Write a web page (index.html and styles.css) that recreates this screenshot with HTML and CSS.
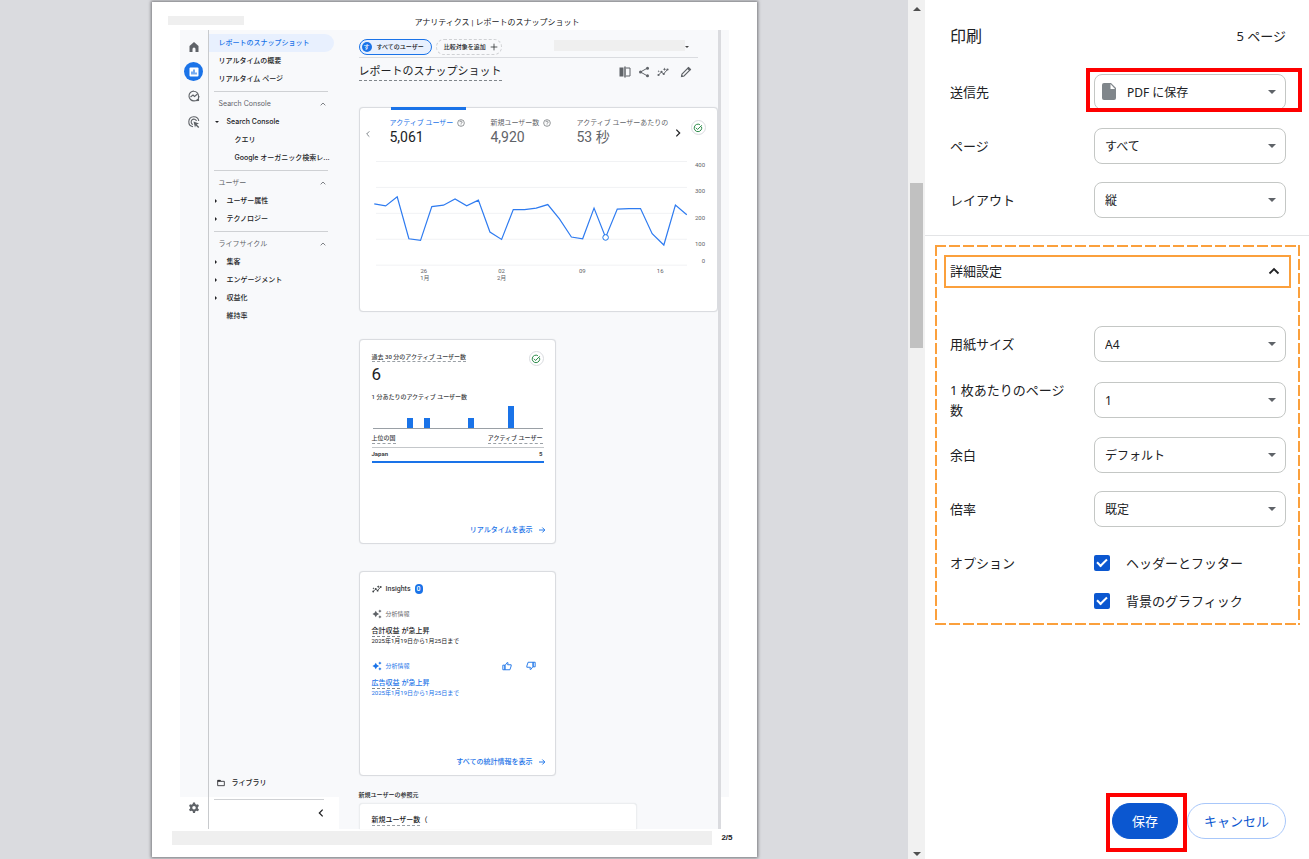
FILE: index.html
```
<!DOCTYPE html>
<html lang="ja">
<head>
<meta charset="utf-8">
<title>印刷</title>
<link rel="stylesheet" href="styles.css">
</head>
<body>
<svg class="sprite" aria-hidden="true">
  <symbol id="chev-up" viewBox="0 0 24 24"><path d="M5 16l7-7 7 7" fill="none" stroke="currentColor" stroke-width="2.4"/></symbol>
  <symbol id="chev-left" viewBox="0 0 24 24"><path d="M16 4l-8 8 8 8" fill="none" stroke="currentColor" stroke-width="3"/></symbol>
  <symbol id="chev-right" viewBox="0 0 24 24"><path d="M8 4l8 8-8 8" fill="none" stroke="currentColor" stroke-width="3"/></symbol>
  <symbol id="help" viewBox="0 0 24 24"><circle cx="12" cy="12" r="10" fill="none" stroke="currentColor" stroke-width="2"/><path d="M8.800 9.500a3.200 3.200 0 1 1 5 2.600c-1.200.9-1.800 1.400-1.800 2.900M12 16.500v2.200" fill="none" stroke="currentColor" stroke-width="2"/></symbol>
  <symbol id="check-circle" viewBox="0 0 24 24"><path d="M20.500 9a9 9 0 1 1-4-5" fill="none" stroke="currentColor" stroke-width="2.200"/><path d="M7 11.500l4 4L21 5.500" fill="none" stroke="currentColor" stroke-width="2.200"/></symbol>
  <symbol id="arrow" viewBox="0 0 24 24"><path d="M3 12h17M13 4.500l7.500 7.500-7.500 7.500" fill="none" stroke="currentColor" stroke-width="2.800"/></symbol>
  <symbol id="insight" viewBox="0 0 24 24"><path d="M3 18l6-6 4 4 8-9" fill="none" stroke="currentColor" stroke-width="2"/><g fill="currentColor"><circle cx="3" cy="18" r="2.200"/><circle cx="9" cy="11.500" r="2.200"/><circle cx="13.500" cy="16" r="2.200"/><circle cx="21" cy="7" r="2.200"/><path d="M15 3l1 2.500 2.500 1-2.500 1-1 2.500-1-2.500-2.500-1 2.500-1zM3.500 8l.7 1.800L6 10.500l-1.800.7-.7 1.800-.7-1.800L1 10.500l1.800-.7z"/></g></symbol>
  <symbol id="spark" viewBox="0 0 24 24"><path d="M9 4l2.800 5.200L17 12l-5.200 2.800L9 20l-2.800-5.200L1 12l5.200-2.800zM19 1l1.400 2.600L23 5l-2.600 1.400L19 9l-1.400-2.600L15 5l2.600-1.400zM19 15l1.400 2.600L23 19l-2.600 1.400L19 23l-1.400-2.600L15 19l2.600-1.400z" fill="currentColor"/></symbol>
  <symbol id="thumb" viewBox="0 0 24 24"><path d="M2 10h5v11H2zM7 11l6-8 1.500 1.500L13.500 9H22v3l-3 9H7z" fill="none" stroke="currentColor" stroke-width="2.200" stroke-linejoin="round"/></symbol>
</svg>

<div class="dialog">
  <main class="preview">
    <article class="paper">
      <header class="paper-head">
        <span class="mask mask-date"></span>
        <span class="paper-title">アナリティクス | レポートのスナップショット</span>
      </header>

      <div class="app">
        <div class="rail">
          <svg class="rail-icon" viewBox="0 0 24 24"><path d="M3 10l9-8 9 8v12h-6v-6a3 3 0 0 0-6 0v6H3z" fill="#5f6368"/></svg>
          <span class="rail-active"><svg class="rail-icon" viewBox="0 0 24 24"><rect x="3" y="3" width="18" height="18" rx="2" fill="#fff"/><path d="M8 11v6M12 7v10M16 13v4" stroke="#1a73e8" stroke-width="2.400"/></svg></span>
          <svg class="rail-icon" viewBox="0 0 24 24"><path d="M21 21v-9a9.500 9.500 0 1 0-9 9.500zM22 12a10 10 0 1 1-10-10" fill="none" stroke="#5f6368" stroke-width="2.200"/><path d="M5 14l5-4 3 3 6-5" fill="none" stroke="#5f6368" stroke-width="2.200"/><path d="M15 22h7v-7z" fill="#5f6368"/></svg>
          <svg class="rail-icon" viewBox="0 0 24 24"><path d="M10 21.500A10 10 0 1 1 21.500 10M10 17a5.500 5.500 0 1 1 7-7" fill="none" stroke="#5f6368" stroke-width="2.200"/><path d="M11 11l11 4-4.500 2 5 5-2 2-5-5-1.500 4z" fill="#5f6368"/></svg>
          <span class="rail-foot"><svg class="rail-icon" viewBox="0 0 24 24"><path fill="#5f6368" fill-rule="evenodd" d="M10 1h4l.6 3 2.500 1.400 2.900-1 2 3.500-2.300 2v2.900l2.300 2-2 3.500-2.900-1-2.500 1.400-.6 3.300h-4l-.6-3.300-2.500-1.400-2.900 1-2-3.500 2.300-2V9.900l-2.300-2 2-3.500 2.900 1L9.400 4zM12 8a3.500 3.500 0 1 0 0 7 3.500 3.500 0 0 0 0-7z"/></svg></span>
        </div>

        <nav class="nav">
          <a class="nav-row current" href="#">レポートのスナップショット</a>
          <a class="nav-row" href="#">リアルタイムの概要</a>
          <a class="nav-row" href="#">リアルタイム ページ</a>
          <hr class="nav-line">
          <button class="nav-row group">Search Console<svg class="ico8"><use href="#chev-up"/></svg></button>
          <button class="nav-row branch open">Search Console</button>
          <a class="nav-row leaf" href="#">クエリ</a>
          <a class="nav-row leaf" href="#">Google オーガニック検索レ...</a>
          <hr class="nav-line">
          <button class="nav-row group">ユーザー<svg class="ico8"><use href="#chev-up"/></svg></button>
          <button class="nav-row branch">ユーザー属性</button>
          <button class="nav-row branch">テクノロジー</button>
          <hr class="nav-line">
          <button class="nav-row group">ライフサイクル<svg class="ico8"><use href="#chev-up"/></svg></button>
          <button class="nav-row branch">集客</button>
          <button class="nav-row branch">エンゲージメント</button>
          <button class="nav-row branch">収益化</button>
          <a class="nav-row plain" href="#">維持率</a>
          <a class="nav-row library" href="#"><svg class="ico8" viewBox="0 0 24 24"><path d="M2 4h8l2 3h10v13H2z" fill="none" stroke="currentColor" stroke-width="2.400"/><path d="M2 4h8l2 4H2z" fill="currentColor"/></svg>ライブラリ</a>
          <div class="nav-foot"><button class="icon-btn" aria-label="閉じる"><svg class="ico10"><use href="#chev-left"/></svg></button></div>
        </nav>

        <section class="report">
          <div class="chips">
            <button class="chip chip-on"><span class="chip-mark">す</span>すべてのユーザー</button>
            <button class="chip">比較対象を追加<svg class="ico8" viewBox="0 0 24 24"><path d="M12 2v20M2 12h20" stroke="currentColor" stroke-width="2.200"/></svg></button>
            <span class="mask mask-range"></span><span class="tiny-caret"></span>
          </div>
          <div class="title-row">
            <h1 class="title">レポートのスナップショット</h1>
            <div class="tools">
              <svg class="ico12" viewBox="0 0 24 24"><path d="M1 3h8v18H1zM10.500 1h3v22h-3z" fill="currentColor"/><path d="M14 4h8v16h-8" fill="none" stroke="currentColor" stroke-width="2"/></svg>
              <svg class="ico12" viewBox="0 0 24 24"><path d="M19 4L5 12l14 8" fill="none" stroke="currentColor" stroke-width="2"/><g fill="currentColor"><circle cx="19" cy="4.500" r="3"/><circle cx="5" cy="12" r="3"/><circle cx="19" cy="19.500" r="3"/></g></svg>
              <svg class="ico12"><use href="#insight"/></svg>
              <svg class="ico12 pencil" viewBox="0 0 24 24"><path d="M3 21l1-5L17 3l4 4L8 20z" fill="none" stroke="currentColor" stroke-width="2.200"/><path d="M14 5l3-3 5 5-3 3zM2 22l1-5 4 4z" fill="currentColor"/></svg>
            </div>
          </div>

          <div class="card wide">
            <div class="metrics">
              <button class="icon-btn prev" aria-label="前へ"><svg class="ico8"><use href="#chev-left"/></svg></button>
              <button class="metric metric-on"><span class="metric-label">アクティブ ユーザー <svg class="ico8"><use href="#help"/></svg></span><span class="metric-value">5,061</span></button>
              <button class="metric metric-second"><span class="metric-label">新規ユーザー数 <svg class="ico8"><use href="#help"/></svg></span><span class="metric-value">4,920</span></button>
              <button class="metric metric-third"><span class="metric-label">アクティブ ユーザーあたりの</span><span class="metric-value">53 秒</span></button>
              <button class="icon-btn next" aria-label="次へ"><svg class="ico10"><use href="#chev-right"/></svg></button>
              <span class="ok"><svg class="ico10"><use href="#check-circle"/></svg></span>
            </div>
            <svg class="line-chart" viewBox="0 0 358 130" role="img" aria-label="アクティブ ユーザーの推移">
              <path class="grid" d="M16 6.500h312M16 32.500h312M16 58.500h312M16 84.500h312M16 110.500h312"/>
              <polyline class="trend" points="14.300,49 25.700,51 37.300,42 49,84 60.700,85.700 72,51.700 83.700,50.300 95.300,44 107,51 118.700,45.300 130.300,77.300 142,84.700 153.700,54.700 165,54.700 176.700,53.300 188.300,49.700 200,64 212,82.300 223.300,84 234.700,53.300 246.300,82.700 258,54.300 269.700,53.700 281.300,53.700 293,79 304.700,90.300 316.300,50.300 327.700,60"/>
              <circle class="dot" cx="246.300" cy="82.700" r="2.800"/>
              <g class="ticks-y"><text x="346" y="12">400</text><text x="346" y="38">300</text><text x="346" y="65">200</text><text x="346" y="91">100</text><text x="346" y="108">0</text></g>
              <g class="ticks-x"><text x="64" y="118">26</text><text x="65" y="125">1月</text><text x="142" y="118">02</text><text x="142" y="125">2月</text><text x="223" y="118">09</text><text x="301" y="118">16</text></g>
            </svg>
          </div>

          <div class="card">
            <div class="card-top"><h2 class="small dotted">過去 30 分のアクティブ ユーザー数</h2><span class="ok"><svg class="ico10"><use href="#check-circle"/></svg></span></div>
            <p class="big">6</p>
            <p class="small sub">1 分あたりのアクティブ ユーザー数</p>
            <svg class="bars" viewBox="0 0 172 25"><path d="M35 14h6v10h-6zM52 14h6v10h-6zM96 14h6v10h-6zM136 2h6v22h-6z" fill="#1a73e8"/><path d="M1 24.500h170" stroke="#9aa0a6"/></svg>
            <table class="countries">
              <thead><tr><th><span class="dotted">上位の国</span></th><th><span class="dotted">アクティブ ユーザー</span></th></tr></thead>
              <tbody><tr><td>Japan</td><td>5</td></tr></tbody>
            </table>
            <a class="more" href="#">リアルタイムを表示<svg class="ico8"><use href="#arrow"/></svg></a>
          </div>

          <div class="card">
            <h2 class="insights"><svg class="ico10"><use href="#insight"/></svg>Insights<span class="count">0</span></h2>
            <div class="insight">
              <div class="insight-kind"><svg class="ico10"><use href="#spark"/></svg>分析情報</div>
              <p class="insight-title"><span>合計収益</span> が急上昇</p>
              <p class="insight-date">2025年1月19日から1月25日まで</p>
            </div>
            <div class="insight insight-new">
              <div class="insight-kind"><svg class="ico10"><use href="#spark"/></svg>分析情報
                <span class="votes"><button class="icon-btn" aria-label="高評価"><svg class="ico10"><use href="#thumb"/></svg></button><button class="icon-btn down" aria-label="低評価"><svg class="ico10"><use href="#thumb"/></svg></button></span></div>
              <p class="insight-title"><span>広告収益</span> が急上昇</p>
              <p class="insight-date">2025年1月19日から1月25日まで</p>
            </div>
            <a class="more" href="#">すべての統計情報を表示<svg class="ico8"><use href="#arrow"/></svg></a>
          </div>

          <h2 class="source-head">新規ユーザーの参照元</h2>
          <div class="card source"><span class="dotted">新規ユーザー数</span>（</div>
        </section>
        <div class="page-bar"></div>
        <div class="page-edge"></div>
      </div>

      <footer class="paper-foot"><span class="mask mask-url"></span><span>2/5</span></footer>
    </article>
  </main>

  <div class="scroll"><span class="scroll-arrow up"></span><span class="thumb"></span><span class="scroll-arrow down"></span></div>

  <form class="panel">
    <header class="panel-head"><h1>印刷</h1><span>5 ページ</span></header>
    <div class="basic">
      <div class="row"><label for="dest">送信先</label><div class="pick marked with-icon"><svg class="file" viewBox="0 0 14 17"><path d="M2 0h7l5 5v10a2 2 0 0 1-2 2H2a2 2 0 0 1-2-2V2a2 2 0 0 1 2-2z" fill="#80868b"/><path d="M8.500 1v5H13z" fill="#fff"/></svg><select id="dest"><option>PDF に保存</option></select></div></div>
      <div class="row"><label for="pages">ページ</label><div class="pick"><select id="pages"><option>すべて</option></select></div></div>
      <div class="row"><label for="layout">レイアウト</label><div class="pick"><select id="layout"><option>縦</option></select></div></div>
    </div>
    <section class="advanced">
      <button type="button" class="advanced-toggle" aria-expanded="true">詳細設定<svg class="ico12" viewBox="0 0 24 24"><path d="M3 17l9-9 9 9" fill="none" stroke="currentColor" stroke-width="3.600"/></svg></button>
      <div class="advanced-rows">
        <div class="row"><label for="size">用紙サイズ</label><div class="pick"><select id="size"><option>A4</option></select></div></div>
        <div class="row row-tall"><label for="per">1 枚あたりのページ数</label><div class="pick"><select id="per"><option>1</option></select></div></div>
        <div class="row"><label for="margin">余白</label><div class="pick"><select id="margin"><option>デフォルト</option></select></div></div>
        <div class="row"><label for="scale">倍率</label><div class="pick"><select id="scale"><option>既定</option></select></div></div>
        <div class="row options"><span class="options-name">オプション</span>
          <div class="checks">
            <label class="check"><input type="checkbox" checked>ヘッダーとフッター</label>
            <label class="check"><input type="checkbox" checked>背景のグラフィック</label>
          </div>
        </div>
      </div>
    </section>
    <footer class="actions">
      <span class="save-mark"><button type="button" class="btn btn-save">保存</button></span>
      <button type="button" class="btn btn-cancel">キャンセル</button>
    </footer>
  </form>
</div>
</body>
</html>
```
FILE: styles.css
```
*, *::before, *::after { box-sizing: border-box; }
body, h1, h2, p { margin: 0; font-weight: inherit; font-size: inherit; }
body { font-family: "Noto Sans", "Noto Sans CJK JP", sans-serif; font-size: 13px; color: #202124; background: #fff; }
button, select { font: inherit; color: inherit; }
button { background: none; border: 0; padding: 0; text-align: left; }
a { color: inherit; text-decoration: none; }
svg { flex: none; }
.sprite { display: none; }
.ico8 { width: 8px; height: 8px; }
.ico10 { width: 10px; height: 10px; }
.ico12 { width: 12px; height: 12px; }

.dialog { display: flex; height: 100vh; min-height: 859px; }
.preview { flex: 1; min-width: 0; display: flex; justify-content: center; align-items: flex-start; padding: 2px 20px; background: #dadbdf; }

/* printed sheet */
.paper { flex: 0 1 605px; min-height: 855px; display: flex; flex-direction: column; background: #fff; box-shadow: 0 0 3px 1px #77787c; font-family: Roboto, "Noto Sans CJK JP", sans-serif; font-size: 7px; line-height: 12px; }
.mask { background: #efefef; }
.paper-head { height: 28px; padding: 14px 16px 0; display: flex; align-items: flex-start; gap: 171px; font-size: 8px; line-height: 14px; white-space: nowrap; }
.mask-date { width: 76px; height: 9px; }
.paper-foot { height: 28px; padding: 2px 24px 0 20px; display: flex; gap: 9px; font: bold 8px/14px "Liberation Sans", sans-serif; }
.mask-url { flex: 1; height: 14px; }

.app { flex: 1; margin: 0 28px; display: flex; background: #f8f9fb; }
.rail { width: 29px; border-right: 1px solid #c8cacd; display: flex; flex-direction: column; align-items: center; padding-top: 11px; gap: 14px; }
.rail-icon { width: 12px; height: 12px; display: block; }
.rail-active { width: 19px; height: 19px; border-radius: 50%; background: #1a73e8; display: grid; place-items: center; margin: -5px 0; }
.rail-foot { margin-top: auto; align-self: stretch; height: 32px; background: #fff; display: flex; justify-content: center; padding-top: 5px; }

.nav { width: 130px; display: flex; flex-direction: column; padding-top: 4px; font-family: Inter, "Noto Sans CJK JP", sans-serif; font-weight: 500; }
.nav-row { display: flex; align-items: center; height: 18px; padding-left: 10px; white-space: nowrap; }
.nav-row.current { width: 125px; background: #e8f0fe; color: #1a73e8; border-radius: 0 9px 9px 0; }
.nav-line { width: 114px; margin: 3px 0 3px 5px; border: 0; border-top: 1px solid #cfd1d4; }
.group { justify-content: space-between; padding-right: 12px; color: #5f6368; font-weight: 400; }
.branch { padding-left: 6px; }
.branch::before { content: ""; width: 2px; margin-right: 10px; border: solid transparent; border-width: 2px 0 2px 2px; border-left-color: #202124; }
.branch.open::before { width: 4px; margin-right: 8px; border-width: 2px 2px 0; border-color: #202124 transparent transparent; }
.leaf { padding-left: 26px; }
.plain { padding-left: 18px; }
.library { margin-top: auto; margin-bottom: 5px; padding-left: 8px; gap: 7px; }
.nav-foot { height: 32px; background: #fff; display: flex; justify-content: flex-end; padding: 0 13px 0 5px; }
.nav-foot::before { content: ""; flex: 1; margin: 2px -8px 0 0; border-top: 1px solid #cfd1d4; }
.icon-btn { display: grid; place-items: center; }

.report { flex: 1; min-width: 0; padding-left: 20px; display: flex; flex-direction: column; }
.chips { height: 28px; margin-right: 20px; padding: 9px 0 2px; display: flex; align-items: flex-start; border-bottom: 1px solid #dadce0; font-size: 6px; font-weight: 500; }
.chip { height: 16px; border: 1px dashed #cfd1d4; border-radius: 8px; padding: 0 3px 0 7px; display: flex; align-items: center; gap: 4px; margin-right: 4px; white-space: nowrap; }
.chip-on { border: 1px solid #1a73e8; background: #e8f0fe; padding: 0 7px 0 2px; gap: 5px; }
.chip-mark { width: 10px; height: 10px; border-radius: 50%; background: #1a73e8; color: #fff; line-height: 10px; text-align: center; }
.mask-range { width: 131px; height: 11px; margin-left: auto; margin-top: 1px; }
.tiny-caret { margin: 7px 9px 0 0; border: solid transparent; border-width: 2px 2px 0; border-top-color: #444; }
.title-row { height: 28px; margin-bottom: 21px; display: flex; align-items: center; justify-content: space-between; padding-right: 26px; }
.title { font-size: 11px; line-height: 16px; border-bottom: 1px dashed #80868b; }
.tools { display: flex; gap: 7px; color: #5f6368; }
.pencil { margin-left: 4px; }

.card { width: 197px; height: 205px; margin-bottom: 27px; flex: none; display: flex; flex-direction: column; background: #fff; border: 1px solid #dadce0; border-radius: 4px; box-shadow: 0 0 1px #dadce0; padding: 0 11px 0 12px; }
.card.wide { width: 100%; padding: 0; }
.metrics { display: flex; height: 47px; }
.prev { width: 30px; padding: 5px 13px 0 0; color: #80868b; }
.next { flex: 1; padding-top: 3px; }
.metric { position: relative; width: 101px; padding-top: 9px; color: #5f6368; display: flex; flex-direction: column; white-space: nowrap; overflow: visible; justify-content: flex-start; }
.metric-second { width: 86px; }
.metric-third { width: 92px; overflow: hidden; }
.metric-label { display: flex; align-items: center; gap: 4px; }
.metric-value { font-size: 14px; line-height: 16px; }
.metric-on { color: #202124; }
.metric-on::before { content: ""; position: absolute; left: 1px; top: -1px; width: 75px; height: 3px; background: #1a73e8; }
.metric-on .metric-label { color: #1a73e8; }
.metric-on .ico8 { color: #5f6368; }
.ok { width: 15px; height: 15px; border: 1px solid #dadce0; border-radius: 50%; display: grid; place-items: center; color: #188038; }
.metrics .ok { margin: 12px 11px 0 3px; }
.line-chart { width: 100%; font-size: 6px; }
.grid { stroke: #f1f2f4; }
.trend { fill: none; stroke: #2e7bf0; stroke-width: 1.2; }
.dot { fill: #fff; stroke: #1a73e8; stroke-width: 1; }
.ticks-y, .ticks-x { fill: #5f6368; }
.ticks-y { text-anchor: end; }
.ticks-x { text-anchor: middle; }

.card-top { display: flex; justify-content: space-between; padding-top: 12px; height: 24px; }
.card-top .ok { margin-top: -1px; }
.small { font-size: 6px; line-height: 10px; color: #3c4043; font-weight: 500; }
.dotted { border-bottom: 1px dashed #9aa0a6; }
.card-top .dotted { height: 10px; }
.big { font-size: 17px; line-height: 20px; }
.sub { padding: 8px 0 2px; }
.bars { width: 100%; }
.countries { width: 100%; border-collapse: collapse; font-size: 6px; line-height: 10px; margin-top: 4px; }
.countries th, .countries td { padding: 0; text-align: left; font-weight: 500; color: #3c4043; }
.countries th { height: 14px; vertical-align: top; border-bottom: 1px solid #c4c7ca; }
.countries th span { display: inline-block; }
.countries td { height: 15px; font-weight: 700; border-bottom: 2px solid #1a73e8; }
.countries tr > :last-child { text-align: right; padding-right: 1px; }
.more { margin: auto -2px 7px 0; display: flex; align-items: center; justify-content: flex-end; gap: 5px; color: #1a73e8; font-weight: 500; }
.insights { display: flex; align-items: center; gap: 4px; padding-top: 11px; color: #3c4043; font-weight: 500; }
.count { width: 8px; height: 10px; border-radius: 4px; background: #1a73e8; color: #fff; line-height: 10px; text-align: center; }
.insight { padding: 13px 0 2px; color: #202124; }
.insight-new { color: #1a73e8; }
.insight-kind { display: flex; align-items: center; gap: 4px; font-size: 6px; margin-bottom: 6px; color: #5f6368; }
.insight-new .insight-kind { color: inherit; }
.insight-title { line-height: 10px; font-weight: 500; display: flex; gap: 2px; }
.insight-title span { border-bottom: 1px dashed #80868b; }
.insight-date { font-size: 6px; line-height: 8px; }
.votes { margin-left: auto; margin-right: 8px; display: flex; gap: 14px; }
.votes .down svg { transform: rotate(180deg); }
.source-head { height: 28px; margin-top: -28px; padding-top: 12px; line-height: 16px; font-size: 6px; font-weight: 500; }
.card.source { width: 278px; height: 26px; margin: 0; border-bottom: 0; border-radius: 4px 4px 0 0; border-color: #eceef0; flex-direction: row; padding-top: 11px; line-height: 10px; font-weight: 500; }
.source .dotted { height: 11px; }
.page-bar { width: 3px; background: #dadbdf; }
.page-edge { width: 8px; border-bottom: 32px solid #fff; }

/* scrollbar */
.scroll { width: 17px; background: #f1f1f1; display: flex; flex-direction: column; align-items: center; padding: 7px 0 3px; }
.scroll-arrow { border: 4px solid transparent; }
.up { border-top: 0; border-bottom-color: #505050; }
.down.scroll-arrow { border-bottom: 0; border-top-color: #505050; margin-top: auto; }
.thumb { width: 13px; height: 165px; margin-top: 172px; background: #c1c1c1; }

/* print settings */
.panel { width: 384px; flex: none; display: flex; flex-direction: column; }
.panel-head { height: 65px; padding: 5px 23px 0 25px; display: flex; align-items: center; justify-content: space-between; }
.panel-head h1 { font-size: 16px; }
.basic { padding: 0 23px 8px 25px; border-bottom: 1px solid #e3e4e6; }
.row { display: grid; grid-template-columns: 1fr 192px; column-gap: 24px; align-items: center; min-height: 54px; line-height: 20px; }
.row-tall { min-height: 57px; }
.pick { position: relative; }
.pick::after { content: ""; position: absolute; right: 10px; top: 16px; border: solid transparent; border-width: 4px 4px 0; border-top-color: #5f6368; pointer-events: none; }
.pick select { appearance: none; display: block; width: 100%; height: 36px; padding: 2px 24px 0 10px; border: 1px solid #c4c7c5; border-radius: 8px; background: #fff; font-size: 12px; }
.pick.with-icon select { padding-left: 32px; }
.file { position: absolute; left: 8px; top: 9px; width: 14px; height: 17px; }
.marked::before { content: ""; position: absolute; inset: -6px -16px -2px -8px; border: 4px solid #fe0000; pointer-events: none; }
.advanced { margin: 9px 9px 0 10px; padding: 10px 9px 5px; --dash: #fba03c 0 11px, transparent 11px 14px;
  background:
    repeating-linear-gradient(90deg, var(--dash)) 0 0 / 100% 2px no-repeat,
    repeating-linear-gradient(90deg, var(--dash)) 0 100% / 100% 2px no-repeat,
    repeating-linear-gradient(180deg, var(--dash)) 0 0 / 2px 100% no-repeat,
    repeating-linear-gradient(180deg, var(--dash)) 100% 0 / 2px 100% no-repeat; }
.advanced-toggle { width: 100%; height: 33px; border: 2px solid #fba03c; padding: 0 9px 2px 4px; display: flex; align-items: center; justify-content: space-between; }
.advanced-rows { padding: 29px 5px 0 6px; }
.options { align-items: start; padding-top: 8px; }
.options-name { line-height: 38px; }
.check { display: flex; align-items: center; height: 38px; gap: 16px; }
.check input { appearance: none; width: 16px; height: 16px; margin: 0; border-radius: 2px; background: #0b57d0; display: grid; place-items: center; }
.check input::after { content: ""; width: 10px; height: 6px; border: solid #fff; border-width: 0 0 2px 2px; transform: rotate(-45deg) translate(1px, -1px); }
.check input:not(:checked) { background: #fff; border: 2px solid #5f6368; }
.actions { margin-top: auto; padding: 0 23px 20px; display: flex; justify-content: flex-end; gap: 9px; }
.save-mark { position: relative; }
.save-mark::after { content: ""; position: absolute; inset: -10px -9px -13px -6px; border: 4px solid #fe0000; pointer-events: none; }
.btn { height: 36px; border-radius: 18px; text-align: center; border: 1px solid #a8c7fa; color: #0b57d0; padding: 0 16px 2px; white-space: nowrap; }
.btn-save { background: #0b57d0; border-color: #0b57d0; color: #fff; padding: 0 19px 2px; }
```
